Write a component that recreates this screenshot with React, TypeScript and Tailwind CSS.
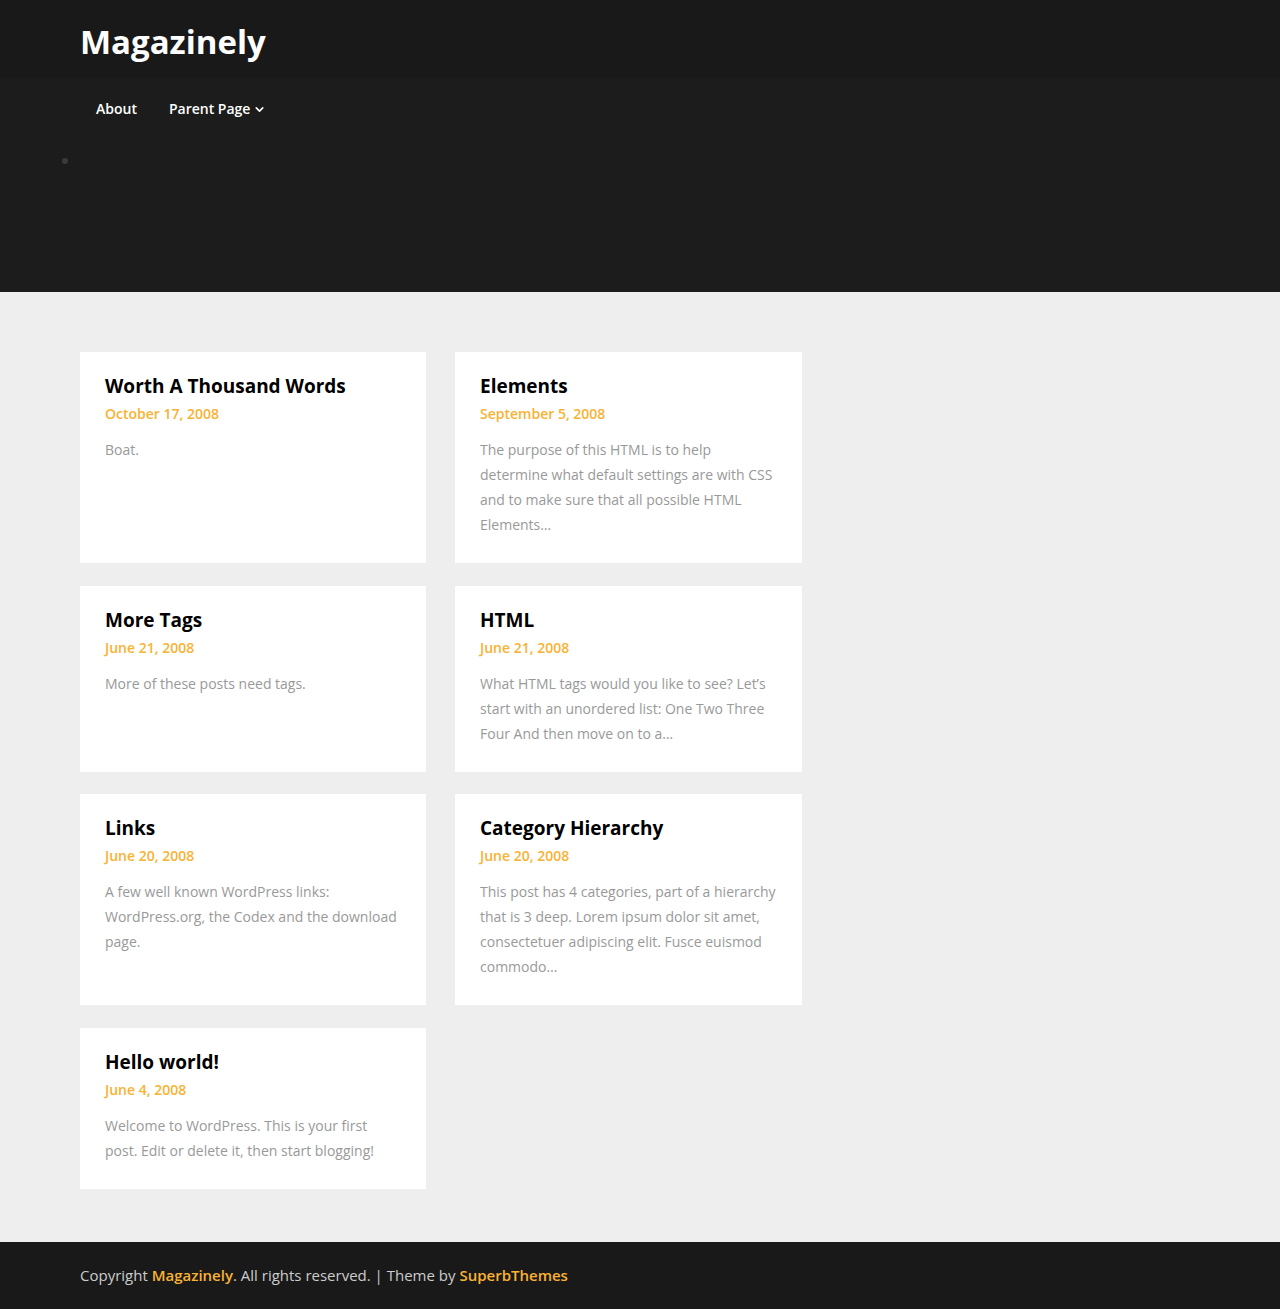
import { ChevronDown } from "lucide-react";

const posts = [
  {
    title: "Worth A Thousand Words",
    date: "October 17, 2008",
    excerpt: "Boat.",
  },
  {
    title: "Elements",
    date: "September 5, 2008",
    excerpt:
      "The purpose of this HTML is to help determine what default settings are with CSS and to make sure that all possible HTML Elements…",
  },
  {
    title: "More Tags",
    date: "June 21, 2008",
    excerpt: "More of these posts need tags.",
  },
  {
    title: "HTML",
    date: "June 21, 2008",
    excerpt:
      "What HTML tags would you like to see? Let’s start with an unordered list: One Two Three Four And then move on to a…",
  },
  {
    title: "Links",
    date: "June 20, 2008",
    excerpt:
      "A few well known WordPress links: WordPress.org, the Codex and the download page.",
  },
  {
    title: "Category Hierarchy",
    date: "June 20, 2008",
    excerpt:
      "This post has 4 categories, part of a hierarchy that is 3 deep. Lorem ipsum dolor sit amet, consectetuer adipiscing elit. Fusce euismod commodo…",
  },
  {
    title: "Hello world!",
    date: "June 4, 2008",
    excerpt:
      "Welcome to WordPress. This is your first post. Edit or delete it, then start blogging!",
  },
];

const PostCard = ({ post }: { post: (typeof posts)[number] }) => (
  <article className="bg-white px-[25px] pt-[22px] pb-[26px]">
    <h2 className="text-[19px] font-bold leading-[24px] text-black">
      <a href="#">{post.title}</a>
    </h2>
    <div className="mt-[6px] text-[14px] font-semibold leading-[20px] text-[#f9b233]">
      {post.date}
    </div>
    <p className="mt-[13px] text-[14px] leading-[25px] text-[#999999]">
      {post.excerpt}
    </p>
  </article>
);

export default function App() {
  return (
    <div
      className="min-h-screen bg-[#eeeeee]"
      style={{ fontFamily: '"Open Sans", "Liberation Sans", sans-serif' }}
    >
      <header>
        <div className="flex h-[78px] items-center bg-[#191919] pt-[6px]">
          <div className="mx-auto w-full max-w-[1120px]">
            <a href="#" className="text-[33px] font-bold leading-none text-white">
              Magazinely
            </a>
          </div>
        </div>
        <div className="h-[214px] bg-[#1c1c1c]">
          <nav className="mx-auto flex max-w-[1120px] pt-[21px]">
            <a href="#" className="px-4 text-[14px] font-semibold leading-[20px] text-white">
              About
            </a>
            <a
              href="#"
              className="flex items-center gap-[3px] px-4 text-[14px] font-semibold leading-[20px] text-white"
            >
              Parent Page
              <ChevronDown size={13} strokeWidth={3} />
            </a>
          </nav>
          <div className="mt-[39px] pl-[62px]">
            <span className="block h-[6px] w-[6px] rounded-full bg-[#3a3a3a]" />
          </div>
        </div>
      </header>

      <main className="mx-auto max-w-[1120px] pt-[60px] pb-[53px]">
        <div className="grid grid-cols-[346px_347px] gap-x-[29px] gap-y-[22.5px]">
          {posts.map((p) => (
            <PostCard key={p.title} post={p} />
          ))}
        </div>
      </main>

      <footer className="flex h-[67px] items-center bg-[#191919]">
        <div className="mx-auto w-full max-w-[1120px] text-[15px] leading-[20px] text-[#cccccc]">
          Copyright{" "}
          <a href="#" className="font-semibold text-[#f9b233]">
            Magazinely
          </a>
          . All rights reserved. | Theme by{" "}
          <a href="#" className="font-semibold text-[#f9b233]">
            SuperbThemes
          </a>
        </div>
      </footer>
    </div>
  );
}
